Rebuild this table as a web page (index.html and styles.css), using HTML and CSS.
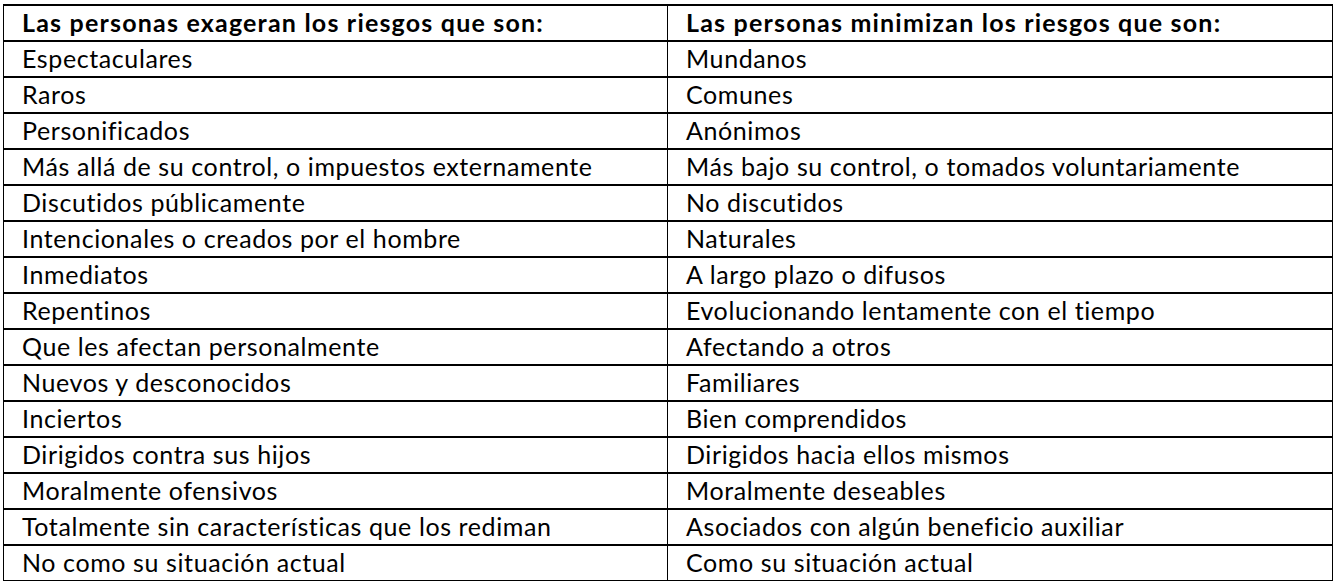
FILE: index.html
```html
<!DOCTYPE html>
<html lang="es">
<head>
<meta charset="utf-8">
<link rel="stylesheet" href="styles.css">
</head>
<body>
<table class="risk">
<colgroup><col class="c1"><col class="c2"></colgroup>
<thead>
<tr><th>Las personas exageran los riesgos que son:</th><th>Las personas minimizan los riesgos que son:</th></tr>
</thead>
<tbody>
<tr><td>Espectaculares</td><td>Mundanos</td></tr>
<tr><td>Raros</td><td>Comunes</td></tr>
<tr><td>Personificados</td><td>Anónimos</td></tr>
<tr><td>Más allá de su control, o impuestos externamente</td><td>Más bajo su control, o tomados voluntariamente</td></tr>
<tr><td>Discutidos públicamente</td><td>No discutidos</td></tr>
<tr><td>Intencionales o creados por el hombre</td><td>Naturales</td></tr>
<tr><td>Inmediatos</td><td>A largo plazo o difusos</td></tr>
<tr><td>Repentinos</td><td>Evolucionando lentamente con el tiempo</td></tr>
<tr><td>Que les afectan personalmente</td><td>Afectando a otros</td></tr>
<tr><td>Nuevos y desconocidos</td><td>Familiares</td></tr>
<tr><td>Inciertos</td><td>Bien comprendidos</td></tr>
<tr><td>Dirigidos contra sus hijos</td><td>Dirigidos hacia ellos mismos</td></tr>
<tr><td>Moralmente ofensivos</td><td>Moralmente deseables</td></tr>
<tr><td>Totalmente sin características que los rediman</td><td>Asociados con algún beneficio auxiliar</td></tr>
<tr><td>No como su situación actual</td><td>Como su situación actual</td></tr>
</tbody>
</table>
</body>
</html>
```
FILE: styles.css
```css
html, body {
  margin: 0;
  padding: 0;
  background: #ffffff;
}
body {
  padding: 4px 0 0 3px;
}
.risk {
  border-collapse: collapse;
  width: 1329px;
  table-layout: fixed;
  font-family: Lato, "Noto Sans", sans-serif;
  font-size: 25px;
  color: #000;
}
.c1 { width: 664px; }
.c2 { width: 665px; }
.risk th,
.risk td {
  height: 32px;
  padding: 0 0 2px 18px;
  text-align: left;
  vertical-align: middle;
  white-space: nowrap;
  border-top: 2px solid #000;
  border-bottom: 2px solid #000;
  border-left: 1px solid #000;
  border-right: 1px solid #000;
  line-height: 32px;
  letter-spacing: 0.6px;
}
.risk th {
  font-weight: bold;
  letter-spacing: 1.2px;
}
.risk tbody tr:last-child td {
  border-bottom: 1px solid #000;
}
```
